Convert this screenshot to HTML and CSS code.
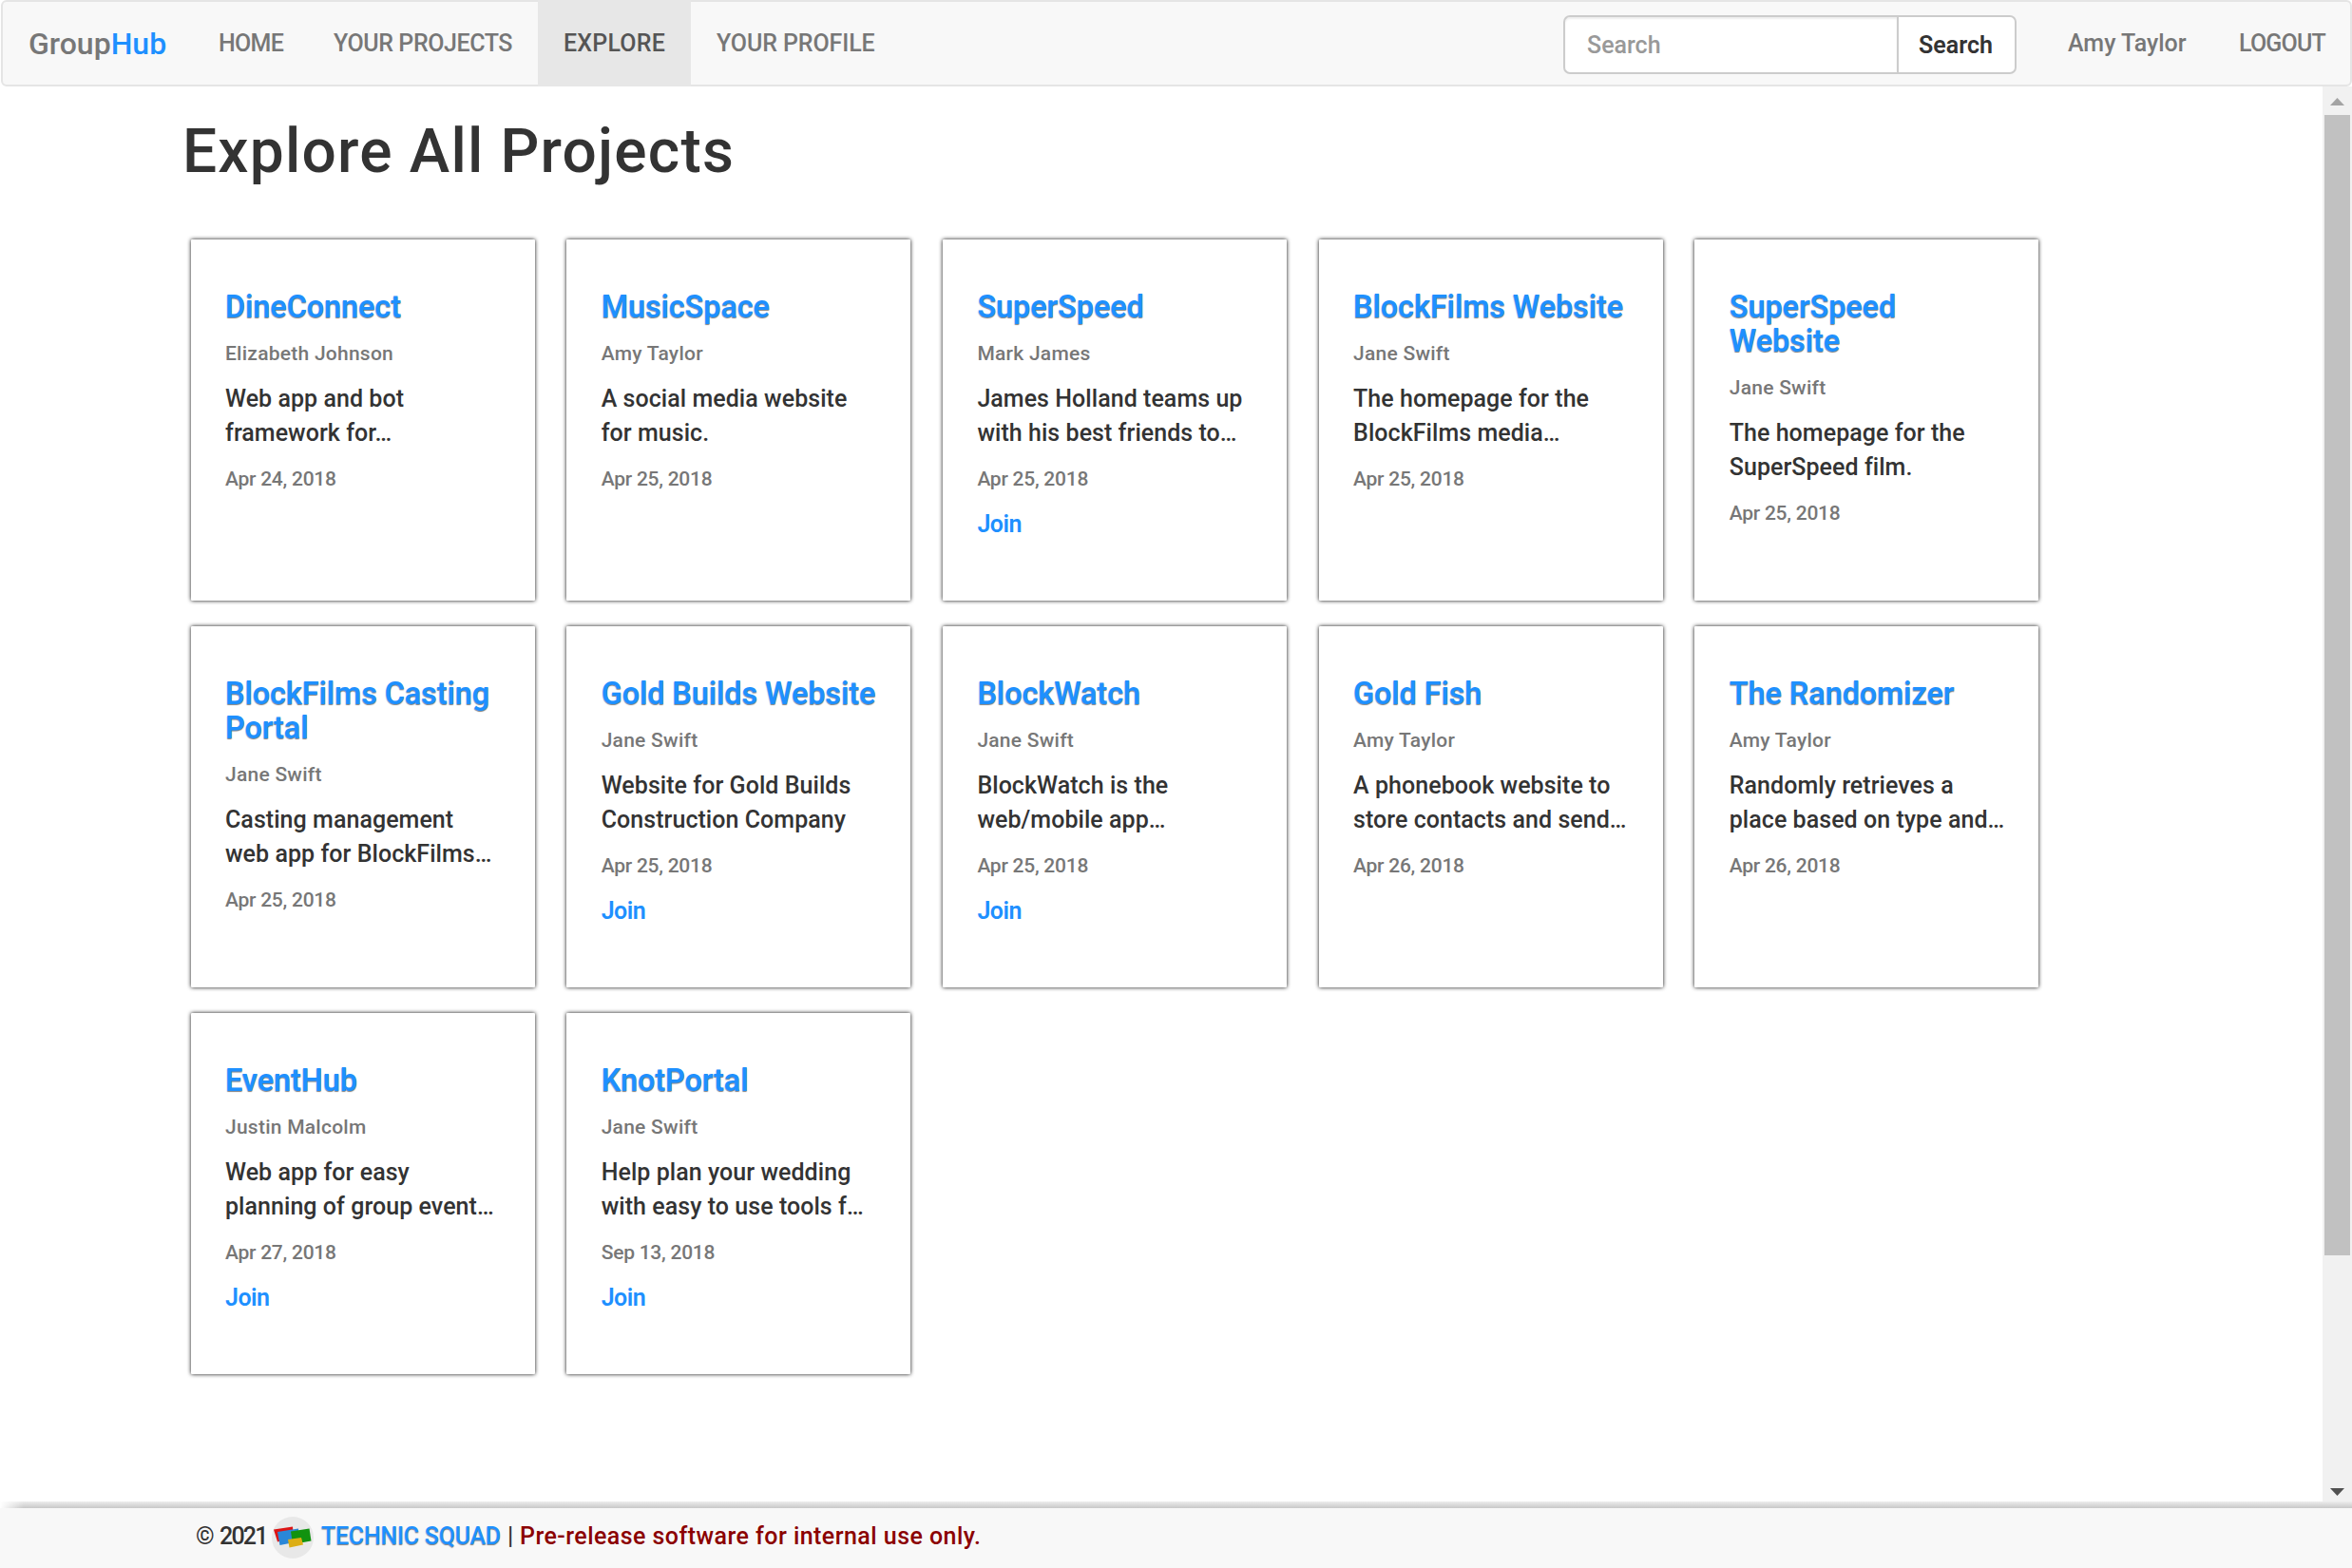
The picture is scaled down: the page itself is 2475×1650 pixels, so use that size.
FILE: index.html
```html
<!DOCTYPE html>
<html lang="en">
<head>
<meta charset="utf-8">
<title>GroupHub - Explore</title>
<link rel="stylesheet" href="styles.css">
</head>
<body>
<nav class="navbar">
  <a class="brand">Group<span>Hub</span></a>
  <div class="links">
    <a class="l-home">HOME</a><a class="l-projects">YOUR PROJECTS</a><a class="active">EXPLORE</a><a class="l-profile">YOUR PROFILE</a>
  </div>
  <form class="search"><div class="field">Search</div><div class="button">Search</div></form>
  <div class="account"><a class="l-user">Amy Taylor</a><a class="l-logout">LOGOUT</a></div>
</nav>
<div class="viewport">
  <main>
    <h1>Explore All Projects</h1>
    <div class="grid">
      <article class="card"><h2>DineConnect</h2><small>Elizabeth Johnson</small><p>Web app and bot<br>framework for…</p><small class="date">Apr 24, 2018</small></article>
      <article class="card"><h2>MusicSpace</h2><small>Amy Taylor</small><p>A social media website<br>for music.</p><small class="date">Apr 25, 2018</small></article>
      <article class="card"><h2>SuperSpeed</h2><small>Mark James</small><p>James Holland teams up<br>with his best friends to…</p><small class="date">Apr 25, 2018</small><a class="join">Join</a></article>
      <article class="card"><h2>BlockFilms Website</h2><small>Jane Swift</small><p>The homepage for the<br>BlockFilms media…</p><small class="date">Apr 25, 2018</small></article>
      <article class="card"><h2>SuperSpeed<br>Website</h2><small>Jane Swift</small><p>The homepage for the<br>SuperSpeed film.</p><small class="date">Apr 25, 2018</small></article>
      <article class="card"><h2>BlockFilms Casting<br>Portal</h2><small>Jane Swift</small><p>Casting management<br>web app for BlockFilms…</p><small class="date">Apr 25, 2018</small></article>
      <article class="card"><h2>Gold Builds Website</h2><small>Jane Swift</small><p>Website for Gold Builds<br>Construction Company</p><small class="date">Apr 25, 2018</small><a class="join">Join</a></article>
      <article class="card"><h2>BlockWatch</h2><small>Jane Swift</small><p>BlockWatch is the<br>web/mobile app…</p><small class="date">Apr 25, 2018</small><a class="join">Join</a></article>
      <article class="card"><h2>Gold Fish</h2><small>Amy Taylor</small><p>A phonebook website to<br>store contacts and send…</p><small class="date">Apr 26, 2018</small></article>
      <article class="card"><h2>The Randomizer</h2><small>Amy Taylor</small><p>Randomly retrieves a<br>place based on type and…</p><small class="date">Apr 26, 2018</small></article>
      <article class="card"><h2>EventHub</h2><small>Justin Malcolm</small><p>Web app for easy<br>planning of group event…</p><small class="date">Apr 27, 2018</small><a class="join">Join</a></article>
      <article class="card"><h2>KnotPortal</h2><small>Jane Swift</small><p>Help plan your wedding<br>with easy to use tools f…</p><small class="date">Sep 13, 2018</small><a class="join">Join</a></article>
    </div>
  </main>
  <div class="scrollbar">
    <svg width="15" height="8" viewBox="0 0 15 8"><path d="M0 8L7.5 0L15 8z" fill="#a3a3a3"/></svg>
    <div class="thumb"></div>
    <svg width="15" height="8" viewBox="0 0 15 8"><path d="M0 0L7.5 8L15 0z" fill="#505050"/></svg>
  </div>
</div>
<div class="footer-shade"></div>
<footer>
  <span class="copy">©</span><span class="year">2021</span>
  <svg class="logo" width="44" height="44" viewBox="0 0 44 44"><circle cx="22" cy="22" r="22" fill="#e8e8e8"/><path d="M2 13.500L22 10.500L23 22L6 26.500z" fill="#dc1414"/><path d="M6 16L28 12.500L29 26L8.500 30z" fill="#2a87d8"/><path d="M20 15.500L39.500 12.500L41.500 25.500L22 29z" fill="#11920f"/><path d="M17 24L31 22L33 29.500L18.500 32.500z" fill="#dcae14"/></svg>
  <a class="squad">TECHNIC SQUAD</a><span class="bar">|</span><span class="notice">Pre-release software for internal use only.</span>
</footer>
</body>
</html>
```
FILE: styles.css
```css
* { box-sizing: border-box; }
body {
  margin: 0;
  width: 2475px;
  height: 1650px;
  overflow: hidden;
  display: flex;
  flex-direction: column;
  background: #fff;
  color: #333;
  font: 500 25px/36.3px Roboto, "Open Sans", sans-serif;
  white-space: nowrap;
}
.navbar {
  flex: none;
  display: flex;
  height: 91px;
  margin-left: 1px;
  border: 2px solid #e5e5e5;
  border-radius: 6px;
  background: #f8f8f8;
  color: #777;
  line-height: 88px;
}
.brand { width: 200px; padding-left: 27px; font-size: 32px; line-height: 88px; }
.brand span { color: #1e90ff; }
.links { display: flex; }
.links a { padding-left: 27px; }
.links .l-home { width: 121px; letter-spacing: -0.7px; }
.links .l-projects { width: 242px; letter-spacing: -0.42px; }
.links .active { width: 161px; margin: -2px 0; padding-top: 2px; background: #e7e7e7; color: #555; letter-spacing: 0.2px; }
.links .l-profile { width: 200px; letter-spacing: -0.1px; }
.search { display: flex; margin: 14px 0 0 718px; width: 477px; height: 62px; line-height: 59px; }
.field { width: 351px; padding-left: 23px; border: 2px solid #ccc; border-right: 0; border-radius: 7px 0 0 7px; background: #fff; color: #999; box-shadow: inset 0 2px 2px rgba(0,0,0,.07); }
.button { width: 126px; padding-left: 21px; border: 2px solid #ccc; border-radius: 0 7px 7px 0; background: #fff; color: #333; font-weight: 600; }
.account { display: flex; padding-left: 54px; }
.l-user { width: 180px; }
.l-logout { letter-spacing: -0.8px; }
.viewport { flex: 1; min-height: 0; display: flex; justify-content: space-between; }
main { padding: 31px 0 0 192px; }
h1 { margin: 0; font-size: 64px; font-weight: 500; line-height: 76px; letter-spacing: 1.200px; }
.grid { display: grid; grid-template-columns: repeat(5, 362px); grid-auto-rows: 380px; gap: 27px 33.700px; margin: 54px 0 0 8.500px; }
.card { padding: 53px 0 0 36.500px; border-radius: 1px; background: #fff; box-shadow: 0 0 4px rgba(0,0,0,.95); }
.card h2 { margin: 0 0 15.500px; font-size: 32.500px; font-weight: 600; line-height: 36px; letter-spacing: -0.15px; color: #1e90ff; text-shadow: 0 1px 1px rgba(0,0,0,.5); }
.card small { display: block; font-size: 21px; line-height: 30px; letter-spacing: 0.250px; color: #777; }
.card .date { letter-spacing: -0.250px; }
.card p { margin: 15px 0 14.500px; letter-spacing: 0.050px; }
.join { display: block; margin-top: 15.500px; color: #1e90ff; font-weight: 600; letter-spacing: -0.500px; }
.scrollbar { display: flex; flex-direction: column; align-items: center; width: 31px; padding: 12px 0 6px; background: #f1f1f1; }
.thumb { width: 27px; height: 1200px; margin: 10px 0 245px; background: #c1c1c1; }
.footer-shade { flex: none; height: 7px; background: linear-gradient(90deg, #fff, rgba(255,255,255,0) 25px), linear-gradient(#ededed, #c8c8c8); }
footer { flex: none; display: flex; align-items: center; height: 63px; padding: 0 0 3px 206px; background: #f8f8f8; }
.copy { width: 25px; }
.year { width: 55px; letter-spacing: -1.800px; }
.logo { margin: 2px 8px 0 0; }
.squad { width: 196px; color: #1e90ff; letter-spacing: -0.250px; text-shadow: 0 1px 1px rgba(0,0,0,.5); }
.bar { width: 13px; }
.notice { color: #8b0000; letter-spacing: 0.450px; }
```
